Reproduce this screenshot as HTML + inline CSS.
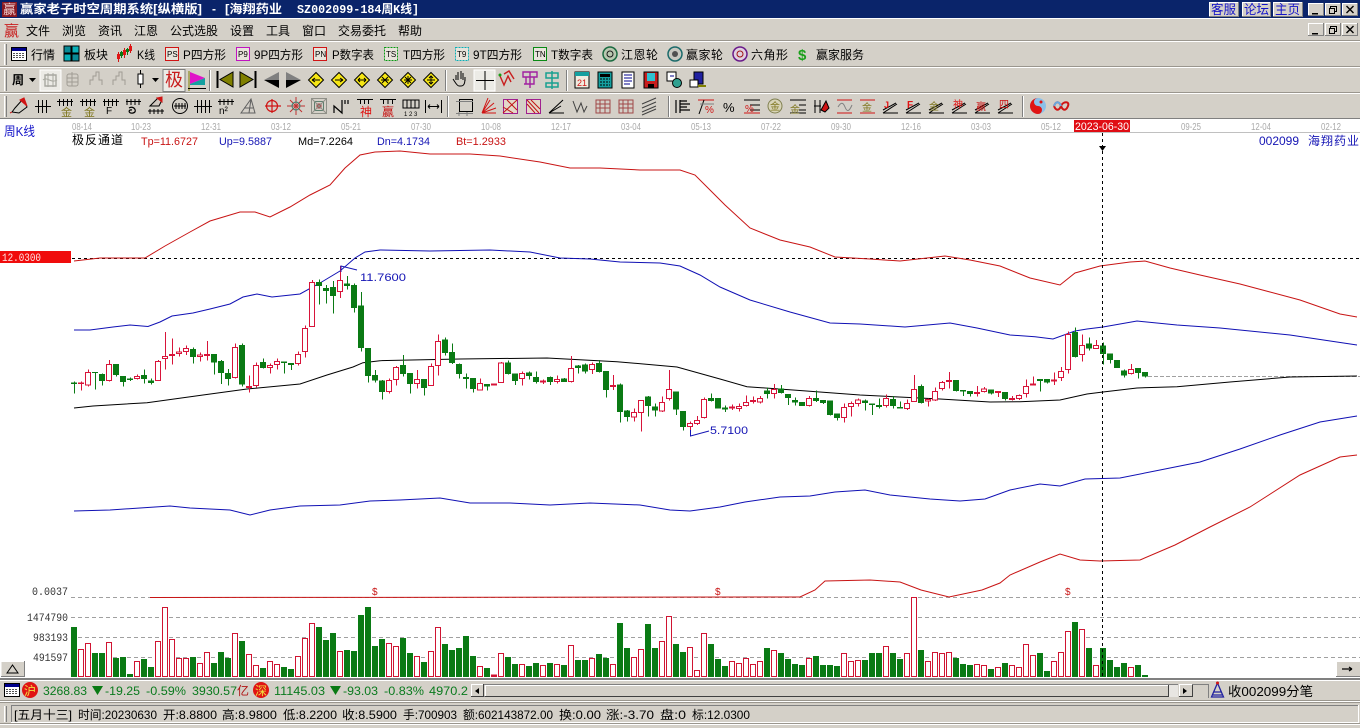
<!DOCTYPE html>
<html><head><meta charset="utf-8"><style>
html,body{margin:0;padding:0;background:#d4d0c8;width:1360px;height:728px;overflow:hidden}
svg{display:block;position:absolute;left:0;top:0}
text{font-family:"Liberation Sans","WenQuanYi Zen Hei","Noto Sans CJK SC",sans-serif;font-size:12px;fill:#000;stroke:none}
.m{font-family:"Liberation Mono","WenQuanYi Zen Hei","Noto Sans CJK SC",monospace}
.d{font-size:10px;fill:#aaa}
.g{fill:#0a7a1e;font-size:12px}
.k{stroke:#d8143a;fill:#fff;stroke-width:3}
.w{stroke:#d8143a;fill:none;stroke-width:3}
.gk{stroke:#0a7a14;fill:#0a7a14;stroke-width:3}
.gw{stroke:#0a7a14;fill:none;stroke-width:3}
.i{font-size:9px}
</style></head><body>
<svg width="1360" height="728" viewBox="0 0 1360 728" xmlns="http://www.w3.org/2000/svg">
<!-- base -->
<rect width="1360" height="728" fill="#d4d0c8"/>
<!-- title bar -->
<rect width="1360" height="18" fill="#0a246a"/>
<rect y="18" width="1360" height="1" fill="#fff"/>
<rect x="2" y="2" width="15" height="15" fill="#8a1a22"/>
<text x="3" y="14" style="fill:#f0d0d0;font-size:13px">赢</text>
<g style="font-weight:bold">
<text x="20" y="13" textLength="182" lengthAdjust="spacingAndGlyphs" style="fill:#fff;font-weight:bold">赢家老子时空周期系统[纵横版]</text>
<text x="212" y="13" style="fill:#fff;font-weight:bold">-</text>
<text x="225" y="13" textLength="57" lengthAdjust="spacingAndGlyphs" style="fill:#fff;font-weight:bold">[海翔药业</text>
<text x="297" y="13" textLength="122" lengthAdjust="spacingAndGlyphs" class="m" style="fill:#fff;font-weight:bold">SZ002099-184周K线]</text>
</g>
<!-- top right -->
<g shape-rendering="crispEdges">
<path d="M1209 2h29v15h-29zM1242 2h28v15h-28zM1273 2h29v15h-29z" fill="#d4d0c8"/>
<path d="M1308 3h15v13h-15zM1325 3h15v13h-15zM1342 3h15v13h-15zM1308 23h15v13h-15zM1325 23h15v13h-15zM1342 23h15v13h-15z" fill="#d4d0c8"/>
<path d="M1308.5 16V3.5H1323M1325.5 16V3.5H1340M1342.5 16V3.5H1357M1308.5 36V23.5H1323M1325.5 36V23.5H1340M1342.5 36V23.5H1357M1209.5 17V2.5H1238M1242.5 17V2.5H1270M1273.5 17V2.5H1302" stroke="#fff" fill="none"/>
<path d="M1308 15.5h15.5V3M1325 15.5h15.5V3M1342 15.5h15.5V3M1308 35.5h15.5V23M1325 35.5h15.5V23M1342 35.5h15.5V23M1209 16.5h29.5V2M1242 16.5h28.5V2M1273 16.5h29.5V2" stroke="#808080" fill="none"/>
<path d="M1312 13h6v1.5h-6zM1312 33h6v1.5h-6z" fill="#000"/>
<path d="M1330.5 8.5v-2h6v5h-2M1329.5 8.5h5v5h-5zM1330.5 28.5v-2h6v5h-2M1329.5 28.5h5v5h-5z" stroke="#000" fill="none"/>
</g>
<path d="M1346.5 6l7 7M1353.5 6l-7 7M1346.5 26l7 7M1353.5 26l-7 7" stroke="#000" stroke-width="1.4"/>
<text x="1211" y="14" textLength="25" lengthAdjust="spacingAndGlyphs" style="fill:#1414c8;font-size:13px">客服</text>
<text x="1244" y="14" textLength="25" lengthAdjust="spacingAndGlyphs" style="fill:#1414c8;font-size:13px">论坛</text>
<text x="1275" y="14" textLength="25" lengthAdjust="spacingAndGlyphs" style="fill:#1414c8;font-size:13px">主页</text>
<!-- menu -->
<text x="4" y="36" style="fill:#c81e1e;font-size:15px">赢</text>
<g>
<text x="26" y="35" textLength="24">文件</text><text x="62" y="35" textLength="24">浏览</text><text x="98" y="35" textLength="24">资讯</text><text x="134" y="35" textLength="24">江恩</text><text x="170" y="35" textLength="48">公式选股</text><text x="230" y="35" textLength="24">设置</text><text x="266" y="35" textLength="24">工具</text><text x="302" y="35" textLength="24">窗口</text><text x="338" y="35" textLength="48">交易委托</text><text x="398" y="35" textLength="24">帮助</text>
</g>
<!-- toolbar separators -->
<g shape-rendering="crispEdges">
<path d="M0 40.5H1360M0 66.5H1360M0 92.5H1360" stroke="#9a968e"/>
<path d="M0 41.5H1360M0 67.5H1360M0 93.5H1360" stroke="#fff"/>
<path d="M4.5 44v21M4.5 70v21M4.5 96v21" stroke="#fff" stroke-width="1"/>
<path d="M6.5 44v21M6.5 70v21M6.5 96v21" stroke="#808080" stroke-width="1"/>
<path d="M0 118.5H1360" stroke="#808080"/>
<path d="M209.5 70v21M445.5 70v21M566.5 70v21M447.5 96v21M668.5 96v21M1022.5 96v21" stroke="#808080"/>
<path d="M210.5 70v21M446.5 70v21M567.5 70v21M448.5 96v21M669.5 96v21M1023.5 96v21" stroke="#fff"/>
</g>
<!-- toolbar 1 -->
<g shape-rendering="crispEdges">
<rect x="11.5" y="47.5" width="15" height="13" fill="#fff" stroke="#000"/><rect x="12" y="48" width="14" height="3" fill="#00008c"/>
<path d="M13 53.5h12M13 55.5h12M13 57.5h12" stroke="#555" stroke-dasharray="2 1"/>
<rect x="64" y="46" width="7" height="7" fill="#0a8a96" stroke="#000"/><rect x="72" y="46" width="7" height="7" fill="#0ab0b8" stroke="#000"/><rect x="64" y="54" width="7" height="7" fill="#0ab0b8" stroke="#000"/><rect x="72" y="54" width="7" height="7" fill="#0a8a96" stroke="#000"/>
<path d="M118.5 52v10M124.5 48v10M130.5 44v9" stroke="#d01414"/><path d="M121.5 51v7" stroke="#0a7a14"/><path d="M127.5 48v7" stroke="#0a7a14"/>
<path d="M117 54h3v5h-3zM123 50h3v5h-3zM129 46h3v5h-3z" fill="#e01414"/><path d="M120 52h3v4h-3zM126 49h3v3h-3z" fill="#0a7a14"/>
<rect x="165.5" y="47.5" width="13" height="13" fill="#e8e4dc" stroke="#d01414"/>
<rect x="236.5" y="47.5" width="13" height="13" fill="#e8e4dc" stroke="#c014c0"/>
<rect x="313.5" y="47.5" width="13" height="13" fill="#e8e4dc" stroke="#d01414"/>
<rect x="384.5" y="47.5" width="13" height="13" fill="#e8e4dc" stroke="#0a9a14" stroke-dasharray="2 1"/>
<rect x="455.5" y="47.5" width="13" height="13" fill="#e8e4dc" stroke="#0ab0b8" stroke-dasharray="2 1"/>
<rect x="533.5" y="47.5" width="13" height="13" fill="#e8e4dc" stroke="#0a8a14"/>
</g>
<text x="167" y="57" class="i" style="font-size:8px">PS</text><text x="238" y="57" class="i" style="font-size:8px">P9</text><text x="315" y="57" class="i" style="font-size:8px">PN</text><text x="386" y="57" class="i" style="font-size:8px">TS</text><text x="457" y="57" class="i" style="font-size:8px">T9</text><text x="535" y="57" class="i" style="font-size:8px">TN</text>
<text x="31" y="59" textLength="24">行情</text><text x="84" y="59" textLength="24">板块</text><text x="137" y="59" textLength="18" lengthAdjust="spacingAndGlyphs">K线</text>
<text x="183" y="59" textLength="43" lengthAdjust="spacingAndGlyphs">P四方形</text><text x="254" y="59" textLength="49" lengthAdjust="spacingAndGlyphs">9P四方形</text><text x="332" y="59" textLength="42" lengthAdjust="spacingAndGlyphs">P数字表</text><text x="403" y="59" textLength="42" lengthAdjust="spacingAndGlyphs">T四方形</text><text x="473" y="59" textLength="49" lengthAdjust="spacingAndGlyphs">9T四方形</text><text x="551" y="59" textLength="42" lengthAdjust="spacingAndGlyphs">T数字表</text>
<circle cx="610" cy="54" r="7" fill="#b8c8b0" stroke="#1a6a40" stroke-width="1.5"/><circle cx="610" cy="54" r="3" fill="none" stroke="#1a1a1a"/>
<text x="621" y="59" textLength="37">江恩轮</text>
<circle cx="675" cy="54" r="7" fill="#c8c8c0" stroke="#1a6a6a" stroke-width="1.5"/><circle cx="675" cy="54" r="3" fill="#505050"/>
<text x="686" y="59" textLength="37">赢家轮</text>
<circle cx="740" cy="54" r="7" fill="#e0d0e0" stroke="#6a1a8a" stroke-width="1.5"/><circle cx="740" cy="54" r="3" fill="none" stroke="#a01414"/>
<text x="751" y="59" textLength="37">六角形</text>
<text x="798" y="60" style="fill:#1aa01a;font-size:15px;font-weight:bold">$</text>
<text x="816" y="59" textLength="48">赢家服务</text>
<!-- toolbar 2 -->
<text x="12" y="84" style="font-weight:bold">周</text>
<path d="M29 78h7l-3.500 4z" fill="#000"/>
<rect x="40" y="70" width="21" height="21" fill="#ecebe6" stroke="#fff"/>
<path d="M45 75h11v11h-11z" fill="none" stroke="#a8a8a0" stroke-width="1.4"/><path d="M43 80c4-4 8 4 14 0M48 73v14M53 73v14" fill="none" stroke="#a8a8a0"/>
<rect x="67" y="74" width="11" height="12" rx="2" fill="none" stroke="#a09c94"/><path d="M67 78h11M67 82h11M72 72v14" stroke="#a09c94"/>
<path d="M90 85v-5h3v-4h3v-4h3v8h3v5" fill="none" stroke="#a09c94"/>
<path d="M113 85v-5h3v-4h3v-4h3v8h3v5" fill="none" stroke="#a09c94"/>
<rect x="138" y="74" width="5" height="10" fill="#fff" stroke="#000"/><path d="M140.500 70v4M140.500 84v4" stroke="#000"/>
<path d="M152 78h7l-3.500 4z" fill="#000"/>
<rect x="163" y="69.500" width="22" height="22" fill="#ecebe6" stroke="#808080"/>
<text x="165" y="86" style="fill:#c81e1e;font-size:18px">极</text>
<path d="M189 71v20" stroke="#808000"/><path d="M190 72l15 6-15 6z" fill="#e014c8"/><path d="M190 84l15-6v7h-15z" fill="#14a0a0"/><path d="M188 88.500h18" stroke="#000"/>
<!-- nav -->
<path d="M217.500 71v17" stroke="#000" stroke-width="2"/><path d="M233 72v15l-13-7.500z" fill="#808000" stroke="#000"/>
<path d="M255.500 71v17" stroke="#000" stroke-width="2"/><path d="M240 72v15l13-7.500z" fill="#808000" stroke="#000"/>
<path d="M264 80l15-8v8z" fill="#808080"/><path d="M264 80l15 8v-8z" fill="#000"/>
<path d="M301 80l-15-8v8z" fill="#808080"/><path d="M301 80l-15 8v-8z" fill="#000"/>
<g fill="#f6e614" stroke="#000">
<path d="M316 72.500l7.500 7.500-7.500 7.500-7.500-7.500z"/><path d="M339 72.500l7.500 7.500-7.500 7.500-7.500-7.500z"/><path d="M362 72.500l7.500 7.500-7.500 7.500-7.500-7.500z"/><path d="M385 72.500l7.500 7.500-7.500 7.500-7.500-7.500z"/><path d="M408 72.500l7.500 7.500-7.500 7.500-7.500-7.500z"/><path d="M431 72.500l7.500 7.500-7.500 7.500-7.500-7.500z"/>
</g>
<g fill="none" stroke="#000">
<path d="M312 80h8M312 80l3-2M312 80l3 2"/><path d="M335 80h8M343 80l-3-2M343 80l-3 2"/><path d="M358 80h8M358 80l2-2M358 80l2 2M366 80l-2-2M366 80l-2 2"/><path d="M382 77l3 3 3-3M382 83l3-3 3 3M381 80h8"/><path d="M405 77l6 6M411 77l-6 6M404 80h8M408 76v8"/><path d="M427 80h8M431 76v8M429 78l2-2 2 2M429 82l2 2 2-2"/>
</g>
<!-- hand etc -->
<path d="M456 80v-5M458 80v-8M461 79v-8M463 80v-7M465 81v-4c0 4 0 9-4 9h-2c-2 0-4-4-6-7" fill="none" stroke="#000"/>
<rect x="474" y="70" width="21" height="21" fill="#ecebe6" stroke="#fff"/><path d="M485 71v19M476 80.500h18" stroke="#000"/>
<path d="M500 76l4 9 4-9 3 6M504 74l5-3 5 8" fill="none" stroke="#c81e1e" stroke-width="1.4"/><circle cx="500" cy="75" r="1.500" fill="#14a014"/>
<path d="M523 72h14v5h-14zM526 77v7h8v-7M530 72v16M526 84h-2" fill="none" stroke="#a020a0" stroke-width="1.4"/>
<path d="M546 73h12v5h-12zM546 83h12v4h-12zM552 71v18" fill="none" stroke="#18a090" stroke-width="1.5"/>
<rect x="575" y="72" width="14" height="16" fill="#f0ece0" stroke="#000"/><rect x="575" y="72" width="14" height="4" fill="#14a0a0"/><text x="577" y="86" style="fill:#d01414;font-size:9px">21</text>
<rect x="598" y="72" width="14" height="16" fill="#14a0a0" stroke="#000"/><path d="M600 74h10v3h-10z" fill="#000"/><path d="M600 79h10M600 82h10M600 85h10" stroke="#000" stroke-dasharray="2 1"/>
<rect x="622" y="72" width="12" height="16" fill="#fff" stroke="#000"/><path d="M624 75h8M624 78h8M624 81h8M624 84h6" stroke="#00008c"/>
<rect x="644" y="72" width="14" height="16" fill="#c81e1e" stroke="#000"/><rect x="647" y="73" width="8" height="8" fill="#30c0d0"/><rect x="648" y="84" width="6" height="4" fill="#000"/>
<rect x="667" y="72" width="9" height="9" fill="#fff" stroke="#000"/><circle cx="677" cy="83" r="4.500" fill="#30a090" stroke="#000"/><path d="M670 76h4" stroke="#00008c"/>
<rect x="694" y="72" width="9" height="12" fill="#2020a0" stroke="#000"/><rect x="690" y="80" width="8" height="7" fill="#fff" stroke="#000"/><path d="M698 86h8" stroke="#808000" stroke-width="2"/>
<!-- toolbar 3 -->
<g fill="none" stroke="#000" stroke-width="1">
<path d="M12 112l3-4 8-9 4 8-8 6z" fill="#d0d0c8"/><path d="M20 100l4-2 3 8z" fill="#d01414" stroke="#d01414"/><path d="M12 112l-2 1" stroke="#c81e1e"/>
<path d="M38.500 100v13M42.500 100v13M46.500 100v13M35 106.500h16"/>
<path d="M59.500 99v7M63.500 99v7M67.500 99v7M71.500 99v7M57 101.500h16M82.500 99v7M86.500 99v7M90.500 99v7M94.500 99v7M80 101.500h16M104.500 99v7M108.500 99v7M112.500 99v7M116.500 99v7M103 101.500h16M127 99v6M131 99v6M135 99v6M139 99v6M126 101.500h15"/>
<path d="M129 108c5-3 9 4 4 5s-5-4-1-3" stroke-width="1.200"/>
<path d="M148 111h16M150 109v5M154 109v5M158 109v5M162 109v5"/><path d="M150 106l8-8 4 2-3 6z" fill="#d0c8c0"/><path d="M157 98l5-1 0 5z" fill="#d01414" stroke="#d01414"/>
<circle cx="180" cy="106" r="7.500"/><path d="M174 106h12M176 103v6M179 103v6M182 103v6M185 103v6"/>
<path d="M197.500 100v13M201.500 100v13M205.500 100v13M209.500 100v13M194 106.500h18"/>
<path d="M220 99v6M224 99v6M228 99v6M232 99v6M218 101.500h16"/>
<path d="M241 113l10-14 4 14zM249 113l2-14M244 108l9 0" stroke="#606060"/>
<g stroke="#d01414" stroke-width="1.200"><circle cx="272" cy="106" r="5.500"/><path d="M265 106h16M272 99v14"/></g>
<g stroke="#c03030"><path d="M287 106h18M296 97v18M290 100l12 12M302 100l-12 12"/></g><g stroke="#308070"><circle cx="296" cy="106" r="4"/></g>
<rect x="311.500" y="98.500" width="15" height="15" stroke="#909088"/><rect x="314.500" y="101.500" width="9" height="9" stroke="#608070"/><rect x="317" y="104" width="4" height="4" fill="#a05050" stroke="#a05050"/><path d="M312 99l14 14M326 99l-14 14" stroke="#909088"/>
<path d="M334 113l0-7 8 7 0-13M345 100v4M348 100v4" stroke-width="1.200"/>
<path d="M357 99.500h16M360.500 99v5M364.500 99v5M368.500 99v5"/><path d="M380 99.500h16M383.500 99v5M388 99v5M392.500 99v5"/>
<path d="M403 100h16v8h-16zM407 100v8M411 100v8M415 100v8"/>
<path d="M425.500 100v13M441.500 100v13M428 106.500h11M428 106.500l2-2M428 106.500l2 2M439 106.500l-2-2M439 106.500l-2 2"/>
<!-- after sep -->
<rect x="459.500" y="99.500" width="13" height="12"/><path d="M456 101.500h17M456 113.500h17M459 112v4M467 112v4" stroke="#808080"/>
<g stroke="#d01414"><path d="M482 113l8-13M482 113l12-10M482 113l14-5M482 113l6-15M482 113h14"/></g>
<rect x="503.500" y="99.500" width="14" height="14" fill="#e4d8c8" stroke="#a02090"/><path d="M503 113l14-13M507 100l10 10M503 107l10 6" stroke="#c01414"/>
<rect x="526.500" y="99.500" width="14" height="14" fill="#e4d8c8" stroke="#a02090"/><path d="M527 100l12 13M527 104l8 9M531 100l9 9" stroke="#c01414"/>
<path d="M549 113l14-13M549 113l12-7M549 113h15" stroke="#000"/><path d="M573 101l4 11 4-9 3 9 3-6" stroke="#404040"/>
<path d="M596 100h14v13h-14zM596 104h14M596 108h14M600 100v13M605 100v13" stroke="#a04848"/>
<path d="M619 100h14v13h-14zM619 104h14M619 108h14M623 100v13M628 100v13" stroke="#a04848"/>
<path d="M642 104l14-6M642 108l14-6M642 112l14-6M642 115l14-6" stroke="#404040"/>
<path d="M676 100v13M680 100v13M680 101h7M680 104h10M680 107h7M680 110h10" stroke-width="1.200"/>
<path d="M698 100h16" stroke="#d01414"/><path d="M699 114l5-14" stroke="#000"/><path d="M700 104h14" stroke="#808080"/>
<path d="M744 100h16M750 105h10M750 110h10M744 113h16" stroke="#000"/><path d="M744 113h16" stroke="#d01414"/>
<circle cx="775" cy="106" r="7" stroke="#808050" fill="#d8d4b8"/>
<path d="M790 100h16M799 105h7M799 110h7M790 113h16"/>
<path d="M815 100v13M820 100v13M814 106h7"/><path d="M821 110l5-9 3 7-4 4z" fill="#d01414" stroke="#000"/>
<path d="M837 100h15M837 113h15" stroke="#d01414"/><path d="M838 107c3-5 5-5 7 0s4 5 7-2" stroke="#808080"/>
<path d="M860 100h15M860 113h15" stroke="#d01414"/>
<path d="M883 113h15M883 110l13-7M883 113l14-9"/><path d="M906 113h15M906 110l13-7M906 113l14-9"/><path d="M929 113h15M929 110l13-7M929 113l14-9"/><path d="M952 113h15M952 110l13-7M952 113l14-9"/><path d="M975 113h15M975 110l13-7M975 113l14-9"/><path d="M998 113h15M998 110l13-7M998 113l14-9"/>
</g>
<text x="705" y="113" style="fill:#d01414;font-size:10px">%</text>
<text x="723" y="112" style="font-size:13px">%</text>
<text x="745" y="112" style="fill:#d01414;font-size:10px">%</text>
<text x="770" y="110" style="fill:#807820;font-size:10px">金</text>
<text x="790" y="113" style="fill:#807820;font-size:10px">金</text>
<text x="862" y="111" style="fill:#807820;font-size:10px">金</text>
<text x="61" y="116" style="fill:#807820;font-size:11px">金</text><text x="84" y="116" style="fill:#807820;font-size:11px">金</text>
<text x="106" y="114" style="font-size:10px">F</text>
<text x="219" y="114" style="font-size:10px">n²</text>
<text x="360" y="116" style="fill:#e01414;font-size:12px">神</text><text x="382" y="116" style="fill:#c81414;font-size:12px">赢</text>
<text x="404" y="116" style="font-size:6px">1 2 3</text>
<text x="884" y="108" style="fill:#e01414;font-size:9px;font-weight:bold">J</text><text x="907" y="108" style="fill:#e01414;font-size:10px;font-weight:bold">F</text><text x="929" y="110" style="fill:#807820;font-size:10px">金</text><text x="953" y="108" style="fill:#e01414;font-size:10px">神</text><text x="976" y="110" style="fill:#c81414;font-size:10px">赢</text><text x="999" y="108" style="fill:#c81414;font-size:10px">四</text>
<circle cx="1038" cy="106" r="8" fill="#8cc0e8"/><path d="M1038 98a8 8 0 0 0 0 16a4 4 0 0 0 0-8a4 4 0 0 1 0-8z" fill="#e01414"/><circle cx="1041" cy="102" r="1.500" fill="#e01414"/>
<path d="M1054 106c2-5 5-5 7 0s5 5 7 0s-5-5-7 0s-5 5-7 0" fill="none" stroke="#d01414" stroke-width="2"/><path d="M1054 106c2-5 5-5 7 0" fill="none" stroke="#68a8e0" stroke-width="2"/>

<!-- chart -->
<rect x="0" y="119" width="1360" height="559" fill="#fff"/>
<path d="M72 132.500H1360" stroke="#c0c0c0" shape-rendering="crispEdges"/>
<g>
<text class="d" x="72" y="130" textLength="20" lengthAdjust="spacingAndGlyphs">08-14</text><text class="d" x="131" y="130" textLength="20" lengthAdjust="spacingAndGlyphs">10-23</text><text class="d" x="201" y="130" textLength="20" lengthAdjust="spacingAndGlyphs">12-31</text><text class="d" x="271" y="130" textLength="20" lengthAdjust="spacingAndGlyphs">03-12</text><text class="d" x="341" y="130" textLength="20" lengthAdjust="spacingAndGlyphs">05-21</text><text class="d" x="411" y="130" textLength="20" lengthAdjust="spacingAndGlyphs">07-30</text><text class="d" x="481" y="130" textLength="20" lengthAdjust="spacingAndGlyphs">10-08</text><text class="d" x="551" y="130" textLength="20" lengthAdjust="spacingAndGlyphs">12-17</text><text class="d" x="621" y="130" textLength="20" lengthAdjust="spacingAndGlyphs">03-04</text><text class="d" x="691" y="130" textLength="20" lengthAdjust="spacingAndGlyphs">05-13</text><text class="d" x="761" y="130" textLength="20" lengthAdjust="spacingAndGlyphs">07-22</text><text class="d" x="831" y="130" textLength="20" lengthAdjust="spacingAndGlyphs">09-30</text><text class="d" x="901" y="130" textLength="20" lengthAdjust="spacingAndGlyphs">12-16</text><text class="d" x="971" y="130" textLength="20" lengthAdjust="spacingAndGlyphs">03-03</text><text class="d" x="1041" y="130" textLength="20" lengthAdjust="spacingAndGlyphs">05-12</text><text class="d" x="1181" y="130" textLength="20" lengthAdjust="spacingAndGlyphs">09-25</text><text class="d" x="1251" y="130" textLength="20" lengthAdjust="spacingAndGlyphs">12-04</text><text class="d" x="1321" y="130" textLength="20" lengthAdjust="spacingAndGlyphs">02-12</text>
</g>
<rect x="1074" y="120" width="56" height="12" fill="#e00d14"/>
<text x="1075" y="130" textLength="54" lengthAdjust="spacingAndGlyphs" style="fill:#fff;font-size:11px">2023-06-30</text>
<text x="4" y="136" textLength="31" lengthAdjust="spacingAndGlyphs" style="fill:#1414c8;font-size:13px">周K线</text>
<text x="72" y="144" textLength="51" style="font-size:12px">极反通道</text>
<text x="141" y="145" textLength="57" lengthAdjust="spacingAndGlyphs" style="fill:#c81414;font-size:11px">Tp=11.6727</text>
<text x="219" y="145" textLength="53" lengthAdjust="spacingAndGlyphs" style="fill:#1414b4;font-size:11px">Up=9.5887</text>
<text x="298" y="145" textLength="55" lengthAdjust="spacingAndGlyphs" style="font-size:11px">Md=7.2264</text>
<text x="377" y="145" textLength="53" lengthAdjust="spacingAndGlyphs" style="fill:#1414b4;font-size:11px">Dn=4.1734</text>
<text x="456" y="145" textLength="50" lengthAdjust="spacingAndGlyphs" style="fill:#c81414;font-size:11px">Bt=1.2933</text>
<text x="1259" y="145" textLength="40" lengthAdjust="spacingAndGlyphs" style="fill:#1414b4;font-size:12px">002099</text>
<text x="1308" y="145" textLength="51" style="fill:#1414b4;font-size:12px">海翔药业</text>

<!-- dashed grid -->
<g fill="none" shape-rendering="crispEdges">
<path d="M72 258.500H1360" stroke="#000" stroke-dasharray="3 3"/>
<path d="M71 597.500H1360M71 617.500H1360M71 637.500H1360M71 657.500H1360" stroke="#a0a0a0" stroke-dasharray="4 3"/>
<path d="M1148 376.500H1360" stroke="#a0a0a0" stroke-dasharray="4 2"/>
</g>
<rect x="0" y="251" width="71" height="12" fill="#f00c0c"/>
<text x="2" y="261" textLength="39" lengthAdjust="spacingAndGlyphs" class="m" style="fill:#ffe8e8;font-size:11px">12.0300</text>

<!-- indicator lines -->
<g fill="none" stroke-width="1">
<polyline stroke="#c81414" points="74,261 100,258 125,258 145,258 165,246 190,232 210,221 240,212 255,212 270,217 290,207 310,195 330,185 345,168 360,155 375,152 400,151 430,154 470,154 500,156 540,162 570,168 600,168 640,170 680,170 695,175 710,190 725,205 750,228 780,240 810,247 835,257 870,259 900,261 945,256 970,260 1000,266 1030,278 1060,285 1075,273 1100,266 1130,262 1145,261 1170,268 1200,275 1240,284 1270,292 1300,300 1340,314 1357,317"/>
<polyline stroke="#1010b4" points="74,330 90,330 113,327 130,325 148,326.500 160,322 172,316 193,313 210,309 230,304 243,297 257,294 272,297 300,294 320,283 340,271 355,258 365,252 380,250 430,251 490,250 530,252 560,258 590,259 620,262 660,263 680,266 700,275 720,287 750,300 790,312 830,323 860,324 905,327 950,323 977,328 1010,335 1035,336.700 1053,339 1075,331 1087,329 1103,327 1137,321 1177,325 1220,328 1290,335 1357,345"/>
<polyline stroke="#000" points="74,408 93,406 147,402.700 203,395 247,389 300,384 327,375 353,367 363,362.700 380,360.700 460,359 547,358 617,361.700 677,367 720,379 747,386.700 793,390 860,395 940,399 990,402 1020,401.700 1060,400 1087,394 1103,392 1137,388 1177,386.700 1230,382 1290,377 1357,376"/>
<polyline stroke="#1010b4" points="74,511 110,510 140,508 170,506 190,508 230,510 250,515 270,510 300,506 340,505 370,501 400,500 440,498 470,503 510,503 550,505 590,503 640,505 670,510 690,511 720,507 745,502 780,497 810,496 835,492 865,490 890,495 930,499 960,501 985,499 1010,490 1040,484 1060,486 1085,479 1120,478 1160,470 1200,462 1240,449 1280,435 1320,422 1357,416"/>
<polyline stroke="#c81414" points="150,597.500 800,597 815,590 825,581 870,580 900,582 921,590 949,597 982,590 1000,583 1010,575 1040,562 1060,554 1080,560 1100,561 1140,560 1175,545 1210,527 1250,507 1300,475 1340,457 1357,455"/>
</g>
<text x="372" y="595" style="fill:#c81414;font-size:10px">$</text><text x="715" y="595" style="fill:#c81414;font-size:10px">$</text><text x="1065" y="595" style="fill:#c81414;font-size:10px">$</text>

<!-- candles part 1 -->
<g transform="translate(60.5,270) scale(0.33333)" shape-rendering="crispEdges">
<path class="w" d="M63 335V362M84 298V350M147 270V335M231 314V328M294 270V333M315 186V298M336 205V284M357 233V260M378 226V255M420 248V275M441 213V272M525 220V325M567 316V367M588 278V352M630 280V311M651 265V298M714 244V287M735 167V263M756 30V170M840 -12V84M987 325V371M1008 288V347M1071 300V355M1113 280V347M1134 193V317"/>
<path class="k" d="M54 339h15V341h-15zM75 307h15V345h-15zM138 283h15V332h-15zM222 319h15V326h-15zM285 274h15V331h-15zM306 259h15V265h-15zM327 253h15V257h-15zM348 246h15V250h-15zM369 235h15V245h-15zM411 255h15V259h-15zM432 253h15V256h-15zM516 232h15V322h-15zM558 349h15V352h-15zM579 286h15V347h-15zM621 286h15V292h-15zM642 275h15V284h-15zM705 253h15V280h-15zM726 175h15V244h-15zM747 38h15V169h-15zM831 31h15V65h-15zM978 332h15V365h-15zM999 292h15V328h-15zM1062 328h15V341h-15zM1104 289h15V346h-15zM1125 214h15V286h-15z"/>
<path class="gw" d="M42 335V370M105 307V358M126 310V347M168 283V320M189 319V350M210 323V333M252 298V340M273 326V344M399 232V280M462 253V314M483 270V342M504 297V347M546 220V350M609 265V296M672 275V311M693 280V300M777 28V103M798 45V101M819 33V130M861 18V58M882 40V128M903 66V245M924 235V338M945 300V338M966 330V388M1029 255V320M1050 310V371M1092 328V377M1155 203V257M1176 220V282M1197 280V325"/>
<path class="gk" d="M33 339h15V341h-15zM96 307h15V308h-15zM117 313h15V332h-15zM159 283h15V314h-15zM180 319h15V335h-15zM201 327h15V329h-15zM243 316h15V326h-15zM264 333h15V338h-15zM390 238h15V260h-15zM453 253h15V276h-15zM474 274h15V308h-15zM495 310h15V325h-15zM537 226h15V342h-15zM600 278h15V293h-15zM663 276h15V278h-15zM684 280h15V284h-15zM768 37h15V47h-15zM789 55h15V62h-15zM810 52h15V77h-15zM852 42h15V46h-15zM873 46h15V112h-15zM894 108h15V233h-15zM915 235h15V317h-15zM936 316h15V330h-15zM957 333h15V365h-15zM1020 286h15V311h-15zM1041 310h15V341h-15zM1083 328h15V352h-15zM1146 210h15V248h-15zM1167 247h15V277h-15zM1188 284h15V310h-15z"/>
</g>
<!-- candles part 2 -->
<g transform="translate(460.5,340) scale(0.33333)" shape-rendering="crispEdges">
<path class="w" d="M60 115V152M102 130V136M123 66V129M186 95V137M249 118V132M291 106V130M333 48V127M396 68V102M459 105V150M522 205V245M543 180V275M606 170V216M627 90V182M690 245V290M711 228V255M732 172V236M816 194V210M837 190V215M858 167V200M879 170V190M900 168V190M942 132V175M1047 168V200M1152 190V248M1173 185V230M1194 175V200"/>
<path class="k" d="M51 131h15V150h-15zM93 132h15V135h-15zM114 69h15V128h-15zM177 101h15V116h-15zM240 123h15V126h-15zM282 118h15V125h-15zM324 85h15V125h-15zM387 73h15V89h-15zM450 137h15V140h-15zM513 217h15V231h-15zM534 181h15V218h-15zM597 187h15V213h-15zM618 148h15V176h-15zM681 250h15V260h-15zM702 241h15V251h-15zM723 178h15V233h-15zM807 201h15V204h-15zM828 199h15V205h-15zM849 187h15V197h-15zM870 181h15V184h-15zM891 175h15V186h-15zM933 148h15V160h-15zM1038 176h15V197h-15zM1143 203h15V233h-15zM1164 190h15V199h-15zM1185 180h15V191h-15z"/>
<path class="gw" d="M18 100V145M39 115V158M81 133V152M144 62V103M165 100V135M207 95V118M228 94V130M270 110V135M312 114V126M354 75V100M375 70V100M417 60V97M438 94V173M480 130V248M501 210V245M564 168V230M585 190V230M648 155V225M669 214V272M753 160V185M774 175V206M795 196V216M921 142V175M963 135V160M984 163V195M1005 172V196M1026 187V197M1068 152V186M1089 180V192M1110 183V226M1131 220V242"/>
<path class="gk" d="M9 113h15V116h-15zM30 115h15V145h-15zM72 133h15V138h-15zM135 69h15V100h-15zM156 102h15V122h-15zM198 99h15V106h-15zM219 112h15V125h-15zM261 112h15V125h-15zM303 117h15V124h-15zM345 78h15V83h-15zM366 75h15V93h-15zM408 70h15V95h-15zM429 94h15V149h-15zM471 135h15V215h-15zM492 213h15V230h-15zM555 171h15V197h-15zM576 201h15V210h-15zM639 156h15V207h-15zM660 214h15V260h-15zM744 175h15V182h-15zM765 175h15V204h-15zM786 204h15V207h-15zM912 153h15V161h-15zM954 147h15V158h-15zM975 163h15V173h-15zM996 182h15V186h-15zM1017 187h15V197h-15zM1059 175h15V182h-15zM1080 182h15V187h-15zM1101 183h15V224h-15zM1122 222h15V233h-15z"/>
</g>
<!-- candles part 3 -->
<g transform="translate(860.5,320) scale(0.33333)" shape-rendering="crispEdges">
<path class="w" d="M78 223V262M141 238V270M162 165V246M204 235V260M225 203V243M246 183V212M267 156V206M351 198V230M372 201V218M414 213V231M456 228V242M477 224V240M498 178V233M519 170V197M582 157V195M603 141V183M624 34V161M666 44V125M708 60V87M813 132V163"/>
<path class="k" d="M69 235h15V257h-15zM132 250h15V265h-15zM153 209h15V244h-15zM195 239h15V243h-15zM216 214h15V240h-15zM237 187h15V205h-15zM258 181h15V184h-15zM342 217h15V220h-15zM363 207h15V214h-15zM405 215h15V217h-15zM447 236h15V238h-15zM468 226h15V236h-15zM489 199h15V220h-15zM510 192h15V195h-15zM573 180h15V183h-15zM594 154h15V172h-15zM615 44h15V148h-15zM657 76h15V104h-15zM699 76h15V86h-15zM804 148h15V160h-15z"/>
<path class="gw" d="M15 238V272M36 250V285M57 235V265M99 228V265M120 245V264M183 193V250M288 181V215M309 211V228M330 214V229M393 209V224M435 216V241M540 178V215M561 178V191M645 22V112M687 52V92M729 68V134M750 102V130M771 121V143M792 148V172M834 145V176M855 157V172"/>
<path class="gk" d="M6 243h15V248h-15zM27 252h15V254h-15zM48 257h15V259h-15zM90 238h15V257h-15zM111 262h15V264h-15zM174 199h15V248h-15zM279 181h15V212h-15zM300 211h15V213h-15zM321 214h15V221h-15zM384 210h15V219h-15zM426 217h15V236h-15zM531 178h15V181h-15zM552 178h15V186h-15zM636 38h15V110h-15zM678 72h15V84h-15zM720 78h15V100h-15zM741 102h15V119h-15zM762 121h15V143h-15zM783 153h15V165h-15zM825 145h15V158h-15zM846 157h15V168h-15z"/>
</g>
<!-- annotations -->
<path d="M341 272V266L357 270" fill="none" stroke="#1414b4"/>
<text x="360" y="281" textLength="46" lengthAdjust="spacingAndGlyphs" style="fill:#1414b4;font-size:11px">11.7600</text>
<path d="M690.500 430V436L709 431" fill="none" stroke="#1414b4"/>
<text x="710" y="434" textLength="38" lengthAdjust="spacingAndGlyphs" style="fill:#1414b4;font-size:11px">5.7100</text>
<!-- labels -->
<text class="m" x="32" y="595" textLength="36" lengthAdjust="spacingAndGlyphs" style="font-size:11px;fill:#333">0.0037</text>
<text class="m" x="27" y="621" textLength="41" lengthAdjust="spacingAndGlyphs" style="font-size:11px;fill:#333">1474790</text>
<text class="m" x="33" y="641" textLength="35" lengthAdjust="spacingAndGlyphs" style="font-size:11px;fill:#333">983193</text>
<text class="m" x="33" y="661" textLength="35" lengthAdjust="spacingAndGlyphs" style="font-size:11px;fill:#333">491597</text>

<!-- volume -->
<g shape-rendering="crispEdges">
<path fill="#0a7a14" d="M71 627h6V677h-6zM92 653h6V677h-6zM99 653h6V677h-6zM113 658h6V677h-6zM120 657h6V677h-6zM127 674h6V677h-6zM141 659h6V677h-6zM148 667h6V677h-6zM190 657h6V677h-6zM211 663h6V677h-6zM218 652h6V677h-6zM225 658h6V677h-6zM239 641h6V677h-6zM260 668h6V677h-6zM281 667h6V677h-6zM288 669h6V677h-6zM316 627h6V677h-6zM323 640h6V677h-6zM330 633h6V677h-6zM344 650h6V677h-6zM351 651h6V677h-6zM358 615h6V677h-6zM365 607h6V677h-6zM372 646h6V677h-6zM379 639h6V677h-6zM400 638h6V677h-6zM407 653h6V677h-6zM421 662h6V677h-6zM442 644h6V677h-6zM449 650h6V677h-6zM456 648h6V677h-6zM463 636h6V677h-6zM470 656h6V677h-6zM484 668h6V677h-6zM505 657h6V677h-6zM512 664h6V677h-6zM526 666h6V677h-6zM533 663h6V677h-6zM547 663h6V677h-6zM561 665h6V677h-6zM575 660h6V677h-6zM582 660h6V677h-6zM596 654h6V677h-6zM603 658h6V677h-6zM617 623h6V677h-6zM624 648h6V677h-6zM645 624h6V677h-6zM652 648h6V677h-6zM673 644h6V677h-6zM680 652h6V677h-6zM708 644h6V677h-6zM715 659h6V677h-6zM722 666h6V677h-6zM764 648h6V677h-6zM778 653h6V677h-6zM785 659h6V677h-6zM792 664h6V677h-6zM799 665h6V677h-6zM813 656h6V677h-6zM820 665h6V677h-6zM827 665h6V677h-6zM834 666h6V677h-6zM862 660h6V677h-6zM869 653h6V677h-6zM876 653h6V677h-6zM890 653h6V677h-6zM897 659h6V677h-6zM918 650h6V677h-6zM953 658h6V677h-6zM960 664h6V677h-6zM967 665h6V677h-6zM988 669h6V677h-6zM1002 663h6V677h-6zM1037 653h6V677h-6zM1044 671h6V677h-6zM1072 622h6V677h-6zM1086 648h6V677h-6zM1100 648h6V677h-6zM1107 660h6V677h-6zM1114 667h6V677h-6zM1121 663h6V677h-6zM1135 665h6V677h-6zM1142 675h6V677h-6z"/>
<path fill="#fff" stroke="#d01432" d="M78.500 649.500h5V676.500h-5zM85.500 643.500h5V676.500h-5zM106.500 642.500h5V676.500h-5zM134.500 661.500h5V676.500h-5zM155.500 641.500h5V676.500h-5zM162.500 607.500h5V676.500h-5zM169.500 639.500h5V676.500h-5zM176.500 658.500h5V676.500h-5zM183.500 658.500h5V676.500h-5zM197.500 663.500h5V676.500h-5zM204.500 652.500h5V676.500h-5zM232.500 633.500h5V676.500h-5zM246.500 654.500h5V676.500h-5zM253.500 665.500h5V676.500h-5zM267.500 661.500h5V676.500h-5zM274.500 664.500h5V676.500h-5zM295.500 656.500h5V676.500h-5zM302.500 638.500h5V676.500h-5zM309.500 623.500h5V676.500h-5zM337.500 651.500h5V676.500h-5zM386.500 643.500h5V676.500h-5zM393.500 646.500h5V676.500h-5zM414.500 656.500h5V676.500h-5zM428.500 651.500h5V676.500h-5zM435.500 627.500h5V676.500h-5zM477.500 666.500h5V676.500h-5zM491.500 675h5V676.500h-5zM498.500 653.500h5V676.500h-5zM519.500 664.500h5V676.500h-5zM540.500 665.500h5V676.500h-5zM554.500 664.500h5V676.500h-5zM568.500 645.500h5V676.500h-5zM589.500 658.500h5V676.500h-5zM610.500 664.500h5V676.500h-5zM631.500 657.500h5V676.500h-5zM638.500 649.500h5V676.500h-5zM659.500 641.500h5V676.500h-5zM666.500 616.500h5V676.500h-5zM687.500 647.500h5V676.500h-5zM694.500 670.500h5V676.500h-5zM701.500 633.500h5V676.500h-5zM729.500 661.500h5V676.500h-5zM736.500 663.500h5V676.500h-5zM743.500 658.500h5V676.500h-5zM750.500 664.500h5V676.500h-5zM757.500 661.500h5V676.500h-5zM771.500 650.500h5V676.500h-5zM806.500 658.500h5V676.500h-5zM841.500 653.500h5V676.500h-5zM848.500 661.500h5V676.500h-5zM855.500 660.500h5V676.500h-5zM883.500 646.500h5V676.500h-5zM904.500 653.500h5V676.500h-5zM911.500 597.500h5V676.500h-5zM925.500 661.500h5V676.500h-5zM932.500 652.500h5V676.500h-5zM939.500 653.500h5V676.500h-5zM946.500 652.500h5V676.500h-5zM974.500 664.500h5V676.500h-5zM981.500 665.500h5V676.500h-5zM995.500 667.500h5V676.500h-5zM1009.500 665.500h5V676.500h-5zM1016.500 667.500h5V676.500h-5zM1023.500 644.500h5V676.500h-5zM1030.500 655.500h5V676.500h-5zM1051.500 661.500h5V676.500h-5zM1058.500 652.500h5V676.500h-5zM1065.500 631.500h5V676.500h-5zM1079.500 629.500h5V676.500h-5zM1093.500 665.500h5V676.500h-5zM1128.500 667.500h5V676.500h-5z"/>
<rect x="491" y="675" width="6" height="2" fill="#d01432"/>
<!-- crosshair -->
<path d="M1102.500 133V677" stroke="#000" stroke-dasharray="3 3" fill="none"/>
</g>
<path d="M1099 146h7l-3.500 5z" fill="#000"/>
<!-- corner buttons -->
<g shape-rendering="crispEdges">
<rect x="1" y="661" width="23" height="16" fill="#d4d0c8"/><path d="M1 676V661.500H24" stroke="#fff" fill="none"/><path d="M1 676.500H24.500V661" stroke="#808080" fill="none"/>
<rect x="1336" y="661" width="24" height="16" fill="#d4d0c8"/><path d="M1336.500 676V661.500H1360" stroke="#fff" fill="none"/><path d="M1336 676.500H1360" stroke="#808080" fill="none"/>
</g>
<path d="M7 673l5.500-8 5.500 8z" fill="none" stroke="#000"/>
<path d="M1342 669h10M1352 669l-3-2M1352 669l-3 2" fill="none" stroke="#000" stroke-width="1.200"/>

<!-- status bar -->
<g shape-rendering="crispEdges">
<rect x="0" y="678" width="1360" height="2" fill="#808080"/>
<rect x="0" y="680" width="1360" height="1" fill="#fff"/>
<path d="M0 700.500H1360" stroke="#9a968e"/><path d="M0 701.500H1360" stroke="#fff"/><path d="M0 702.500H1360" stroke="#9a968e"/>
<rect x="4.500" y="683.500" width="15" height="13" fill="#fff" stroke="#000"/><rect x="5" y="684" width="14" height="3" fill="#00008c"/><path d="M6 689.500h12M6 691.500h12M6 693.500h12" stroke="#555" stroke-dasharray="2 1"/>
</g>
<circle cx="30" cy="690" r="8" fill="#e01414"/><text x="24" y="695" style="fill:#f0e040;font-size:12px">沪</text>
<text x="43" y="695" textLength="44" lengthAdjust="spacingAndGlyphs" class="g">3268.83</text>
<path d="M92 686h11l-5.500 9z" fill="#0a7a14"/>
<text x="105" y="695" textLength="35" lengthAdjust="spacingAndGlyphs" class="g">-19.25</text>
<text x="146" y="695" textLength="40" lengthAdjust="spacingAndGlyphs" class="g">-0.59%</text>
<text x="192" y="695" textLength="45" lengthAdjust="spacingAndGlyphs" class="g">3930.57</text>
<text x="237" y="695" style="fill:#b01414">亿</text>
<circle cx="261" cy="690" r="8" fill="#e01414"/><text x="255" y="695" style="fill:#f0e040;font-size:12px">深</text>
<text x="274" y="695" textLength="51" lengthAdjust="spacingAndGlyphs" class="g">11145.03</text>
<path d="M330 686h11l-5.500 9z" fill="#0a7a14"/>
<text x="343" y="695" textLength="35" lengthAdjust="spacingAndGlyphs" class="g">-93.03</text>
<text x="384" y="695" textLength="40" lengthAdjust="spacingAndGlyphs" class="g">-0.83%</text>
<text x="429" y="695" textLength="39" lengthAdjust="spacingAndGlyphs" class="g">4970.2</text>
<!-- scrollbar -->
<g shape-rendering="crispEdges">
<rect x="471" y="684" width="12" height="13" fill="#d4d0c8"/><path d="M471.500 697V684.500H483" stroke="#fff" fill="none"/><path d="M471 696.500H483.500V684" stroke="#404040" fill="none"/>
<path d="M484 684.500H1178M484 696.500H1178" stroke="#808080" fill="none"/>
<rect x="485" y="685" width="683" height="12" fill="#d4d0c8"/><path d="M485.500 696V685.500H1168" stroke="#fff" fill="none"/><path d="M485 696.500H1168.500V685" stroke="#404040" fill="none"/>
<rect x="1169" y="685" width="9" height="12" fill="#e8e6e2"/>
<rect x="1179" y="684" width="13" height="13" fill="#d4d0c8"/><path d="M1179.500 697V684.500H1192" stroke="#fff" fill="none"/><path d="M1179 696.500H1192.500V684" stroke="#404040" fill="none"/>
<path d="M1192 684.500H1208M1208.500 684V698" stroke="#808080" fill="none"/>
</g>
<path d="M479 688v6l-4-3zM1183 688v6l4-3z" fill="#000"/>
<path d="M1217.500 683l-6 14h12zM1214 692h7M1213 695h9" fill="none" stroke="#2020a0" stroke-width="1.300"/><circle cx="1217.500" cy="683" r="1.500" fill="#d01414"/>
<text x="1228" y="696" textLength="85" lengthAdjust="spacingAndGlyphs" style="font-size:13px">收002099分笔</text>
<!-- bottom info -->
<g shape-rendering="crispEdges">
<path d="M4.500 706v16" stroke="#fff"/><path d="M6.500 706v16" stroke="#808080"/>
<path d="M11.500 722V705.500H1358" stroke="#808080" fill="none"/><path d="M11 722.500H1358.500V705" stroke="#fff" fill="none"/>
<path d="M0 723.500H1360" stroke="#9a968e"/><path d="M0 724.500H1360" stroke="#fff"/>
</g>
<text x="14" y="719" textLength="58" lengthAdjust="spacingAndGlyphs" style="font-size:12px">[五月十三]</text>
<text x="78" y="719" textLength="79" lengthAdjust="spacingAndGlyphs">时间:20230630</text>
<text x="163" y="719" textLength="54" lengthAdjust="spacingAndGlyphs">开:8.8800</text>
<text x="222" y="719" textLength="55" lengthAdjust="spacingAndGlyphs">高:8.9800</text>
<text x="283" y="719" textLength="54" lengthAdjust="spacingAndGlyphs">低:8.2200</text>
<text x="342" y="719" textLength="55" lengthAdjust="spacingAndGlyphs">收:8.5900</text>
<text x="403" y="719" textLength="54" lengthAdjust="spacingAndGlyphs">手:700903</text>
<text x="463" y="719" textLength="90" lengthAdjust="spacingAndGlyphs">额:602143872.00</text>
<text x="559" y="719" textLength="42" lengthAdjust="spacingAndGlyphs">换:0.00</text>
<text x="606" y="719" textLength="48" lengthAdjust="spacingAndGlyphs">涨:-3.70</text>
<text x="660" y="719" textLength="26" lengthAdjust="spacingAndGlyphs">盘:0</text>
<text x="692" y="719" textLength="58" lengthAdjust="spacingAndGlyphs">标:12.0300</text>
</svg>
</body></html>
